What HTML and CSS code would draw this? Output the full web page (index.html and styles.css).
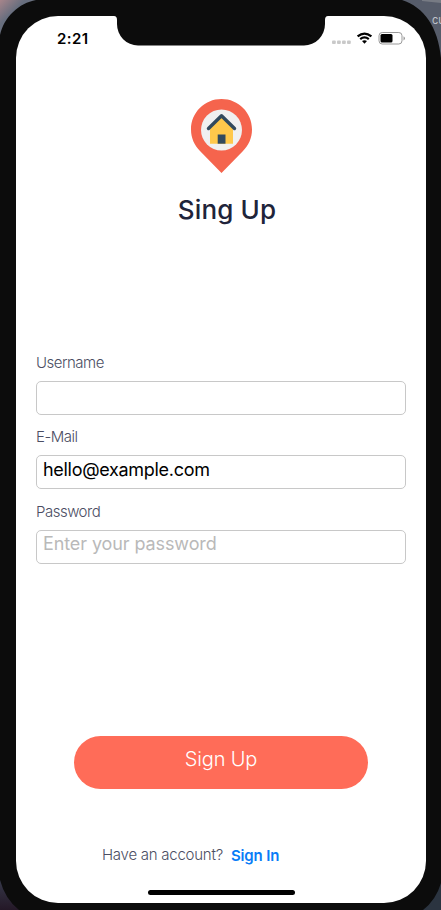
FILE: index.html
```
<!DOCTYPE html>
<html lang="en">
<head>
<meta charset="utf-8">
<title>Sign Up</title>
<link rel="stylesheet" href="styles.css">
</head>
<body>
<main class="device">
  <svg class="frame" width="441" height="910" viewBox="0 0 441 910" aria-hidden="true">
    <defs>
      <linearGradient id="wall" x1="0" y1="0" x2="1" y2="1"><stop offset="0" stop-color="#a7858b"/><stop offset=".35" stop-color="#676e7e"/><stop offset="1" stop-color="#767983"/></linearGradient>
      <linearGradient id="low" x1="0" y1="0" x2="0" y2="1"><stop offset="0" stop-color="#363849"/><stop offset="1" stop-color="#241827"/></linearGradient>
    </defs>
    <path fill="url(#wall)" d="M0 0H36C19 3 4 17 0 35Z"/>
    <path fill="#565c6a" d="M402 0H441V58C438 27 424 7 402 0Z"/>
    <path fill="#777b84" d="M422 0H441V3L422 1Z"/>
    <path fill="url(#low)" d="M0 880Q5 899 19 910H0Z"/>
    <path fill="#2b3440" d="M441 883Q436 900 423 910H441Z"/>
  </svg>
  <span class="backdrop-text">cu</span>
  <section class="screen">
    <svg class="notch" width="214" height="30" viewBox="0 0 214 30" aria-hidden="true"><path fill="#0c0c0c" d="M0 0H214Q211 0 211 4V8A21 21.500 0 0 1 190 29.500H24A21 21.500 0 0 1 3 8V4Q3 0 0 0Z"/></svg>
    <header class="status">
      <time class="clock">2:21</time>
      <svg class="indicators" width="74" height="16" viewBox="0 0 74 16" aria-hidden="true">
        <g fill="#c9c9c9"><rect x="0" y="10.500" width="3.800" height="3.500" rx="1"/><rect x="5" y="10.500" width="3.800" height="3.500" rx="1"/><rect x="10" y="10.500" width="3.800" height="3.500" rx="1"/><rect x="15" y="10.500" width="3.800" height="3.500" rx="1"/></g>
        <g fill="none" stroke="#000" stroke-width="2.200"><path d="M25.600 6.400Q32.500 .7 39.400 6.400"/><path d="M28.200 9.200Q32.500 5.700 36.800 9.200"/></g>
        <path d="M30 11.100Q32.500 9.300 35 11.100L32.500 13.800Z"/>
        <rect x="47" y="2.500" width="23" height="11.500" rx="3.200" fill="#fff" stroke="#999"/>
        <rect x="48.500" y="4" width="12" height="8.500" rx="1.500"/>
        <path fill="#999" d="M71.500 6.200Q73 7 73 8.300T71.500 10.400Z"/>
      </svg>
    </header>
    <div class="brand">
      <svg width="64" height="76" viewBox="0 0 64 76" aria-hidden="true">
        <g transform="translate(.5 0)">
        <path fill="#f5644d" d="M32 1C15 1 1.500 14.500 1.500 31.500C1.500 40 5 47.500 10.500 53L32 75L53.500 53C59 47.500 62.500 40 62.500 31.500C62.500 14.500 49 1 32 1Z"/>
        <circle cx="32" cy="32" r="20.500" fill="#f0f0f0"/>
        <path fill="#ffc84b" d="M20.500 29L32 18.500L43.500 29V45.700H20.500Z"/>
        <path fill="none" stroke="#324a5e" stroke-width="3.400" stroke-linecap="round" stroke-linejoin="round" d="M19 30.500L32 17.700L45 30.500"/>
        <path fill="#324a5e" d="M28.200 36.500H36V45.700H28.200Z"/>
        </g>
      </svg>
      <h1>Sing Up</h1>
    </div>
    <form class="fields">
      <label for="username">Username</label>
      <input id="username" type="text">
      <label for="email">E-Mail</label>
      <input id="email" class="email" type="email" value="hello@example.com">
      <label for="password">Password</label>
      <input id="password" class="password" type="password" placeholder="Enter your password">
    </form>
    <button class="submit" type="button"><span>Sign Up</span></button>
    <p class="account"><span>Have an account?</span><a href="#">Sign In</a></p>
    <div class="home"></div>
  </section>
</main>
</body>
</html>
```
FILE: styles.css
```
* { box-sizing: border-box; }
body { margin: 0; font-family: Inter, "Liberation Sans", sans-serif; }
.device {
  position: relative;
  width: 441px;
  height: 910px;
  padding: 16px 15px 7px 16px;
  overflow: hidden;
  background: #0c0c0c;
}
.frame { position: absolute; inset: 0; }
.backdrop-text {
  position: absolute;
  left: 432px;
  top: 12px;
  color: #c1c4ca;
  font-size: 11px;
  line-height: 16px;
}
.screen {
  position: relative;
  display: flex;
  flex-direction: column;
  align-items: center;
  width: 410px;
  height: 887px;
  border-radius: 42px;
  background: #fff;
}
.notch { position: absolute; top: 0; left: 98px; }
.status {
  display: flex;
  justify-content: space-between;
  width: 100%;
  height: 82px;
  padding: 14px 20px 0 41px;
}
.clock { font-size: 15px; font-weight: 600; line-height: 18px; letter-spacing: .4px; }
.brand { display: flex; flex-direction: column; align-items: center; }
.brand svg { display: block; }
h1 {
  margin: 19px 0 0 12px;
  color: #20243a;
  font-size: 26px;
  font-weight: 500;
  line-height: 34px;
  letter-spacing: .15px;
}
.fields { display: flex; flex-direction: column; width: 370px; margin-top: 126px; }
.fields label {
  height: 28px;
  color: #4b4e63;
  font-size: 15px;
  font-weight: 300;
  line-height: 19px;
  letter-spacing: -.5px;
}
.fields input {
  height: 34px;
  margin: 0 0 12.300px;
  padding: 0 6px 5px;
  border: 1px solid #c8c8c8;
  border-radius: 5px;
  outline: none;
  background: #fff;
  color: #000;
  font: 400 18px/26px Inter, sans-serif;
  letter-spacing: -.3px;
}
.fields .password { padding-bottom: 6px; letter-spacing: -.1px; }
.fields .password::placeholder { color: #b9b9b9; opacity: 1; }
.submit {
  width: 294px;
  height: 53px;
  margin-top: 160px;
  padding: 0 0 6px;
  border: 0;
  border-radius: 27px;
  background: #ff6c58;
  color: #fff;
  font: 350 20px/26px Inter, sans-serif;
  letter-spacing: -.15px;
}
.account {
  display: flex;
  gap: 8px;
  align-self: flex-start;
  margin: 56px 0 0 86px;
  color: #4b4e63;
  font-size: 15px;
  font-weight: 300;
  line-height: 20px;
  letter-spacing: -.25px;
  white-space: nowrap;
}
.account a { color: #087cf7; font-weight: 600; text-decoration: none; letter-spacing: -.15px; position: relative; top: 1px; }
.home { width: 147px; height: 5px; margin-top: 25px; border-radius: 3px; background: #000; }
```
